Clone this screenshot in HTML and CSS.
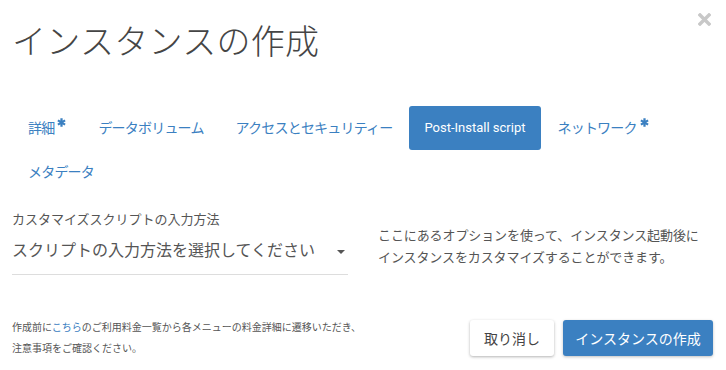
FILE: index.html
```html
<!DOCTYPE html>
<html lang="ja">
<head>
    <meta charset="UTF-8">
    <meta name="viewport" content="width=device-width, initial-scale=1.0">
    <title>インスタンスの作成</title>
    <link rel="stylesheet" href="styles.css">
</head>
<body>
    <div class="modal">
        <div class="modal-header">
            <h1 class="modal-title">インスタンスの作成</h1>
            <button class="close" aria-label="閉じる">
                <svg width="13" height="13" viewBox="0 0 13 13">
                    <path d="M2 2 L11 11 M11 2 L2 11" stroke="currentColor" stroke-width="3.4" stroke-linecap="square"/>
                </svg>
            </button>
        </div>

        <ul class="nav-pills">
            <li><a href="#">詳細<span class="required"><svg width="9" height="9" viewBox="0 0 8 8"><path d="M4 0.3 V7.7 M0.8 2.1 L7.2 5.9 M7.2 2.1 L0.8 5.9" stroke="currentColor" stroke-width="2"/></svg></span></a></li>
            <li><a href="#">データボリューム</a></li>
            <li><a href="#">アクセスとセキュリティー</a></li>
            <li class="active"><a href="#">Post-Install script</a></li>
            <li><a href="#">ネットワーク<span class="required"><svg width="9" height="9" viewBox="0 0 8 8"><path d="M4 0.3 V7.7 M0.8 2.1 L7.2 5.9 M7.2 2.1 L0.8 5.9" stroke="currentColor" stroke-width="2"/></svg></span></a></li>
            <li><a href="#">メタデータ</a></li>
        </ul>

        <div class="tab-body">
            <div class="form-group">
                <label>カスタマイズスクリプトの入力方法</label>
                <div class="select">
                    <span>スクリプトの入力方法を選択してください</span>
                    <span class="caret"></span>
                </div>
            </div>
            <p class="help">ここにあるオプションを使って、インスタンス起動後に<br>インスタンスをカスタマイズすることができます。</p>
        </div>

        <div class="modal-footer">
            <p class="notice">作成前に<a href="#">こちら</a>のご利用料金一覧から各メニューの料金詳細に遷移いただき、<br>注意事項をご確認ください。</p>
            <div class="actions">
                <button class="btn btn-default">取り消し</button>
                <button class="btn btn-primary">インスタンスの作成</button>
            </div>
        </div>
    </div>
</body>
</html>
```

FILE: styles.css
```css
body {
    margin: 0;
    background-color: #fff;
    color: #444;
    font-family: Roboto, "Noto Sans CJK JP", sans-serif;
}
.modal {
    position: relative;
    width: 726px;
    height: 370px;
    padding: 0 13px 0 12px;
    box-sizing: border-box;
}
.modal-header {
    padding-top: 22px;
}
.modal-title {
    margin: 0;
    font-size: 34px;
    font-weight: 300;
    letter-spacing: 0.3px;
    line-height: 40px;
    color: #454545;
}
.close {
    position: absolute;
    top: 13px;
    right: 15px;
    padding: 0;
    border: 0;
    background: none;
    color: #c8c8c8;
    line-height: 0;
}
.nav-pills {
    display: flex;
    flex-wrap: wrap;
    list-style: none;
    margin: 44px 0 0 1px;
    padding: 0;
    width: 700px;
}
.nav-pills li + li {
    margin-left: 2px;
}
.nav-pills li:nth-child(6) {
    margin-left: 0;
}
.nav-pills a {
    display: block;
    padding: 10px 15px;
    font-size: 14px;
    letter-spacing: -0.8px;
    line-height: 24px;
    color: #3b80c1;
    text-decoration: none;
    border-radius: 3px;
}
.nav-pills .active a {
    background-color: #3b80c1;
    color: #fff;
    font-size: 13px;
    letter-spacing: 0;
}
.required {
    display: inline-block;
    vertical-align: top;
    margin: 2px 0 0 3px;
    line-height: 0;
}
.tab-body {
    display: flex;
    margin-top: 16px;
}
.form-group {
    width: 336px;
}
.form-group label {
    display: block;
    font-size: 13px;
    line-height: 20px;
    color: #555;
}
.select {
    display: flex;
    justify-content: space-between;
    align-items: center;
    height: 36px;
    padding: 1px 0 7px 0;
    border-bottom: 1px solid #ddd;
    font-size: 16px;
    color: #555;
}
.caret {
    width: 0;
    height: 0;
    margin: 6px 3px 0 0;
    border-left: 4px solid transparent;
    border-right: 4px solid transparent;
    border-top: 4px solid #555;
}
.help {
    margin: 15px 0 0 30px;
    font-size: 13px;
    letter-spacing: -0.1px;
    line-height: 22px;
    color: #555;
}
.modal-footer {
    display: flex;
    justify-content: space-between;
    align-items: center;
    margin-top: 42px;
}
.notice {
    margin: 0;
    font-size: 10px;
    line-height: 21px;
    color: #555;
}
.notice a {
    color: #3b80c1;
    text-decoration: none;
}
.actions {
    display: flex;
    gap: 9px;
}
.btn {
    height: 36px;
    border: 0;
    border-radius: 3px;
    font-family: inherit;
    font-size: 14px;
}
.btn-default {
    width: 84px;
    background-color: #fff;
    color: #444;
    box-shadow: 0 1px 3px rgba(0, 0, 0, 0.3);
}
.btn-primary {
    width: 150px;
    background-color: #3b80c1;
    color: #fff;
    box-shadow: 0 1px 3px rgba(0, 0, 0, 0.25);
}
```
